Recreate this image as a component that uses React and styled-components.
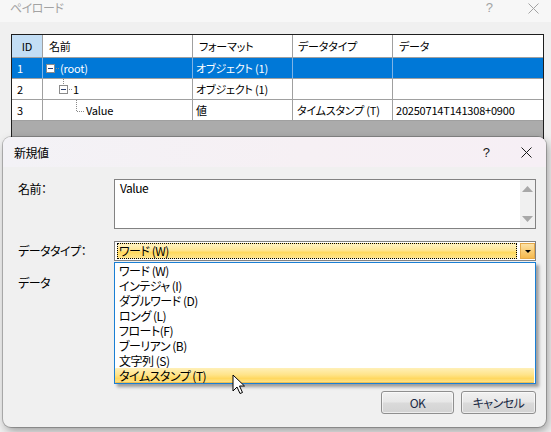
import React from 'react';
import styled, { createGlobalStyle } from 'styled-components';

const GlobalStyle = createGlobalStyle`
  html, body {
    margin: 0;
    padding: 0;
    width: 551px;
    height: 432px;
    overflow: hidden;
    background: #f0f0f0;
  }
  body {
    font-family: "Noto Sans CJK JP", "Noto Sans", sans-serif;
    font-size: 12px;
    letter-spacing: -0.5px;
    font-feature-settings: "palt";
    color: #000;
  }
  #root {
    position: relative;
    width: 551px;
    height: 432px;
  }
`;

const MainWindow = styled.div`
    position: relative;
    width: 551px;
    height: 432px;
    background: #f0f0f0;
    overflow: hidden;
    display: flex;
    flex-direction: column;`

const TitleBar = styled.div`
    height: 22px;
    flex: none;
    display: flex;
    align-items: flex-start;
    background: #f7f7f7;
    padding-left: 10px;
    margin-right: -4px;
    color: #a3a3a3;
    line-height: 16px;`

const TitleText = styled.div`
    flex: 1;
    font-size: 12px;`

const CaptionButton = styled.div`
    width: ${p => p.$width || 44}px;
    height: ${p => p.$height || 16}px;
    display: flex;
    align-items: center;
    justify-content: center;
    color: ${p => p.$faded ? '#a3a3a3' : '#1a1a1a'};
    font-family: "Liberation Sans", sans-serif;
    font-size: 13px;`

const Grid = styled.div`
    margin: 12px 7px 0 11px;
    height: 118px;
    flex: none;
    border: 1px solid #1e1e1e;
    background: #ababab;
    font-size: 11px;
    letter-spacing: -0.2px;`

const GridRow = styled.div`
    display: grid;
    grid-template-columns: 31px 150px 100px 100px 1fr;
    height: ${p => p.$header ? 23 : 21}px;
    background: ${p => p.$selected ? '#0078d7' : '#fff'};
    color: ${p => p.$selected ? '#fff' : '#000'};`

const Cell = styled.div`
    box-sizing: border-box;
    border-bottom: 1px solid #a0a0a0;
    border-right: 1px solid ${p => p.$selected ? '#7fb3e6' : '#a0a0a0'};
    padding-left: ${p => p.$pad ?? 3}px;
    display: flex;
    align-items: center;
    justify-content: ${p => p.$center ? 'center' : 'flex-start'};
    background: ${p => p.$tint || 'transparent'};
    white-space: nowrap;
    overflow: hidden;
    line-height: 16px;
    &:last-child { border-right: none; }`

const NodeLabel = styled.span`
    margin-left: 1px;`

const Dialog = styled.div`
    position: absolute;
    left: 3px;
    top: 137px;
    width: 543px;
    height: 290px;
    border-radius: 8px;
    background: #f0f0f0;
    box-shadow: 0 0 0 1px rgba(0,0,0,0.22), 2px 4px 10px rgba(0,0,0,0.35);
    display: flex;
    flex-direction: column;
    overflow: hidden;`

const DialogTitleBar = styled.div`
    height: 30px;
    flex: none;
    display: flex;
    align-items: center;
    padding-left: 11px;
    background: linear-gradient(90deg, #f3f2f6 0%, #f6f0f4 55%, #f6eff5 100%);`

const DialogBody = styled.div`
    flex: 1;
    display: flex;
    flex-direction: column;
    padding: 12px 10px 13px 15px;`

const FormGrid = styled.div`
    display: grid;
    grid-template-columns: 96px 1fr;
    row-gap: 12px;`

const Label = styled.div`
    line-height: 16px;
    padding-top: ${p => p.$top ?? 2}px;
    align-self: ${p => p.$center ? 'center' : 'start'};
    white-space: nowrap;`

const MemoBox = styled.div`
    height: 50px;
    box-sizing: border-box;
    border: 1px solid #828282;
    background: #fff;
    display: flex;`

const MemoText = styled.div`
    flex: 1;
    padding: 1px 5px;
    line-height: 14px;`

const ScrollTrack = styled.div`
    width: 15px;
    background: #f0f0f0;
    display: flex;
    flex-direction: column;
    align-items: center;
    justify-content: space-between;
    padding: 6px 0 6px;`

const Combo = styled.div`
    position: relative;
    height: 20px;
    box-sizing: border-box;
    border: 1px solid #828282;
    background: #fff;
    display: flex;
    align-items: center;
    gap: 3px;
    padding-left: 2px;`

const ComboField = styled.div`
    flex: 1;
    height: 16px;
    box-sizing: border-box;
    border: 1px dotted #000;
    padding-left: 1px;
    line-height: 14px;
    background: linear-gradient(#fff3c4 0%, #ffe693 45%, #ffd95e 60%, #ffe58c 100%);`

const DropButton = styled.div`
    width: 15px;
    height: 16px;
    box-sizing: border-box;
    border: 1px solid #e5a94a;
    background: linear-gradient(#fde2a6 0%, #f9cd77 50%, #f6b94c 100%);
    display: flex;
    align-items: center;
    justify-content: center;
    &::after {
        content: '';
        border-left: 3px solid transparent;
        border-right: 3px solid transparent;
        border-top: 3px solid #000;
        margin-top: 1px;
    }`

const DropList = styled.div`
    position: absolute;
    top: 20px;
    left: -1px;
    right: -1px;
    height: 122px;
    box-sizing: border-box;
    border: 1px solid #1a7fd4;
    background: #fff;
    box-shadow: 3px 3px 3px rgba(0,0,0,0.35);
    z-index: 2;`

const DropItem = styled.div`
    height: 15px;
    line-height: 15px;
    padding-left: 4px;
    margin-right: 1px;
    box-sizing: border-box;
    white-space: nowrap;
    overflow: hidden;
    ${p => p.$active && `
        background: linear-gradient(#fff0b8 0%, #ffe48a 45%, #ffd860 70%, #ffe590 100%);
        box-shadow: inset 0 -1px 0 #eebf52;
        border-radius: 1px;
    `}`

const DataField = styled.div`
    height: 90px;
    border: 1px solid #828282;
    background: #fff;`

const Spacer = styled.div`
    flex: 1;`

const ButtonRow = styled.div`
    display: flex;
    justify-content: flex-end;
    gap: 7px;`

const PushButton = styled.div`
    width: ${p => p.$width}px;
    height: 23px;
    box-sizing: border-box;
    border: 1px solid #8f8f8f;
    border-radius: 3px;
    background: linear-gradient(#f1f1f1 0%, #e7e7e7 48%, #dadada 52%, #d3d3d3 100%);
    box-shadow: inset 0 0 0 1px rgba(255,255,255,0.6);
    display: flex;
    align-items: center;
    justify-content: center;
    color: #1b2a45;`

const Cursor = styled.svg`
    position: absolute;
    left: 232px;
    top: 374px;
    z-index: 5;`

const rows = [
    { id: 1, level: 0, leaf: false, name: '(root)', format: 'オブジェクト (1)', type: '', data: '', selected: true },
    { id: 2, level: 1, leaf: false, name: '1', format: 'オブジェクト (1)', type: '', data: '' },
    { id: 3, level: 2, leaf: true, name: 'Value', format: '値', type: 'タイムスタンプ (T)', data: '20250714T141308+0900' },
];

const types = ['ワード (W)', 'インテジャ (I)', 'ダブルワード (D)', 'ロング (L)', 'フロート(F)', 'ブーリアン (B)', '文字列 (S)', 'タイムスタンプ (T)'];

function TreeGlyph({ level, leaf }) {
    const dot = { stroke: '#8a8a8a', strokeWidth: 1, strokeDasharray: '1 1' };
    return (
        <svg width="13" height="20" style={{ marginLeft: level * 13, flex: 'none' }}>
            {leaf ? (
                <>
                    <line x1="4.5" y1="0" x2="4.5" y2="11" {...dot} />
                    <line x1="5" y1="11.5" x2="12" y2="11.5" {...dot} />
                </>
            ) : (
                <>
                    {level > 0 && <line x1="4.5" y1="0" x2="4.5" y2="6" {...dot} />}
                    <rect x="0.5" y="6.5" width="8" height="8" fill="#fff" stroke="#8c8c8c" />
                    <line x1="2" y1="10.5" x2="7" y2="10.5" stroke="#2a3d6e" />
                    <line x1="10" y1="10.5" x2="13" y2="10.5" {...dot} />
                </>
            )}
        </svg>
    );
}

function CloseGlyph({ color }) {
    return (
        <svg width="11" height="11" viewBox="0 0 11 11">
            <path d="M0.5 0.5 L10.5 10.5 M10.5 0.5 L0.5 10.5" stroke={color} strokeWidth="1" fill="none" />
        </svg>
    );
}

function ScrollArrow({ down }) {
    return (
        <svg width="11" height="6" viewBox="0 0 11 6">
            <path d={down ? 'M0 0 L11 0 L5.5 6 Z' : 'M0 6 L11 6 L5.5 0 Z'} fill="#a8a8a8" />
        </svg>
    );
}

function App() {
    return (
        <>
            <GlobalStyle />
            <MainWindow>
                <TitleBar>
                    <TitleText>ペイロード</TitleText>
                    <CaptionButton $faded>?</CaptionButton>
                    <CaptionButton $faded><CloseGlyph color="#a3a3a3" /></CaptionButton>
                </TitleBar>

                <Grid>
                    <GridRow $header>
                        <Cell $center $pad={0} $tint="#c3def5">ID</Cell>
                        <Cell $pad={6}>名前</Cell>
                        <Cell $pad={6}>フォーマット</Cell>
                        <Cell $pad={5}>データタイプ</Cell>
                        <Cell $pad={6}>データ</Cell>
                    </GridRow>
                    {rows.map(r => (
                        <GridRow key={r.id} $selected={r.selected}>
                            <Cell $pad={5} $selected={r.selected}>{r.id}</Cell>
                            <Cell $selected={r.selected}>
                                <TreeGlyph level={r.level} leaf={r.leaf} />
                                <NodeLabel>{r.name}</NodeLabel>
                            </Cell>
                            <Cell $selected={r.selected}>{r.format}</Cell>
                            <Cell $pad={4} $selected={r.selected}>{r.type}</Cell>
                            <Cell $selected={r.selected}>{r.data}</Cell>
                        </GridRow>
                    ))}
                </Grid>

                <Dialog>
                    <DialogTitleBar>
                        <TitleText>新規値</TitleText>
                        <CaptionButton $width={40} $height={30}>?</CaptionButton>
                        <CaptionButton $width={40} $height={30}><CloseGlyph color="#1a1a1a" /></CaptionButton>
                    </DialogTitleBar>
                    <DialogBody>
                        <FormGrid>
                            <Label>名前：</Label>
                            <MemoBox>
                                <MemoText>Value</MemoText>
                                <ScrollTrack>
                                    <ScrollArrow />
                                    <ScrollArrow down />
                                </ScrollTrack>
                            </MemoBox>

                            <Label $center $top={0}>データタイプ：</Label>
                            <Combo>
                                <ComboField>ワード (W)</ComboField>
                                <DropButton />
                                <DropList>
                                    {types.map((t, i) => (
                                        <DropItem key={t} $active={i === types.length - 1}>{t}</DropItem>
                                    ))}
                                </DropList>
                            </Combo>

                            <Label>データ</Label>
                            <DataField />
                        </FormGrid>
                        <Spacer />
                        <ButtonRow>
                            <PushButton $width={73}>OK</PushButton>
                            <PushButton $width={75}>キャンセル</PushButton>
                        </ButtonRow>
                    </DialogBody>
                </Dialog>

                <Cursor width="13" height="21" viewBox="0 0 13 21">
                    <path d="M1 1 L1 17 L5 13 L8 19.5 L10.5 18.5 L7.5 12 L12.5 12 Z" fill="#fff" stroke="#000" strokeWidth="1" strokeLinejoin="round" />
                </Cursor>
            </MainWindow>
        </>
    );
}

export default App;
